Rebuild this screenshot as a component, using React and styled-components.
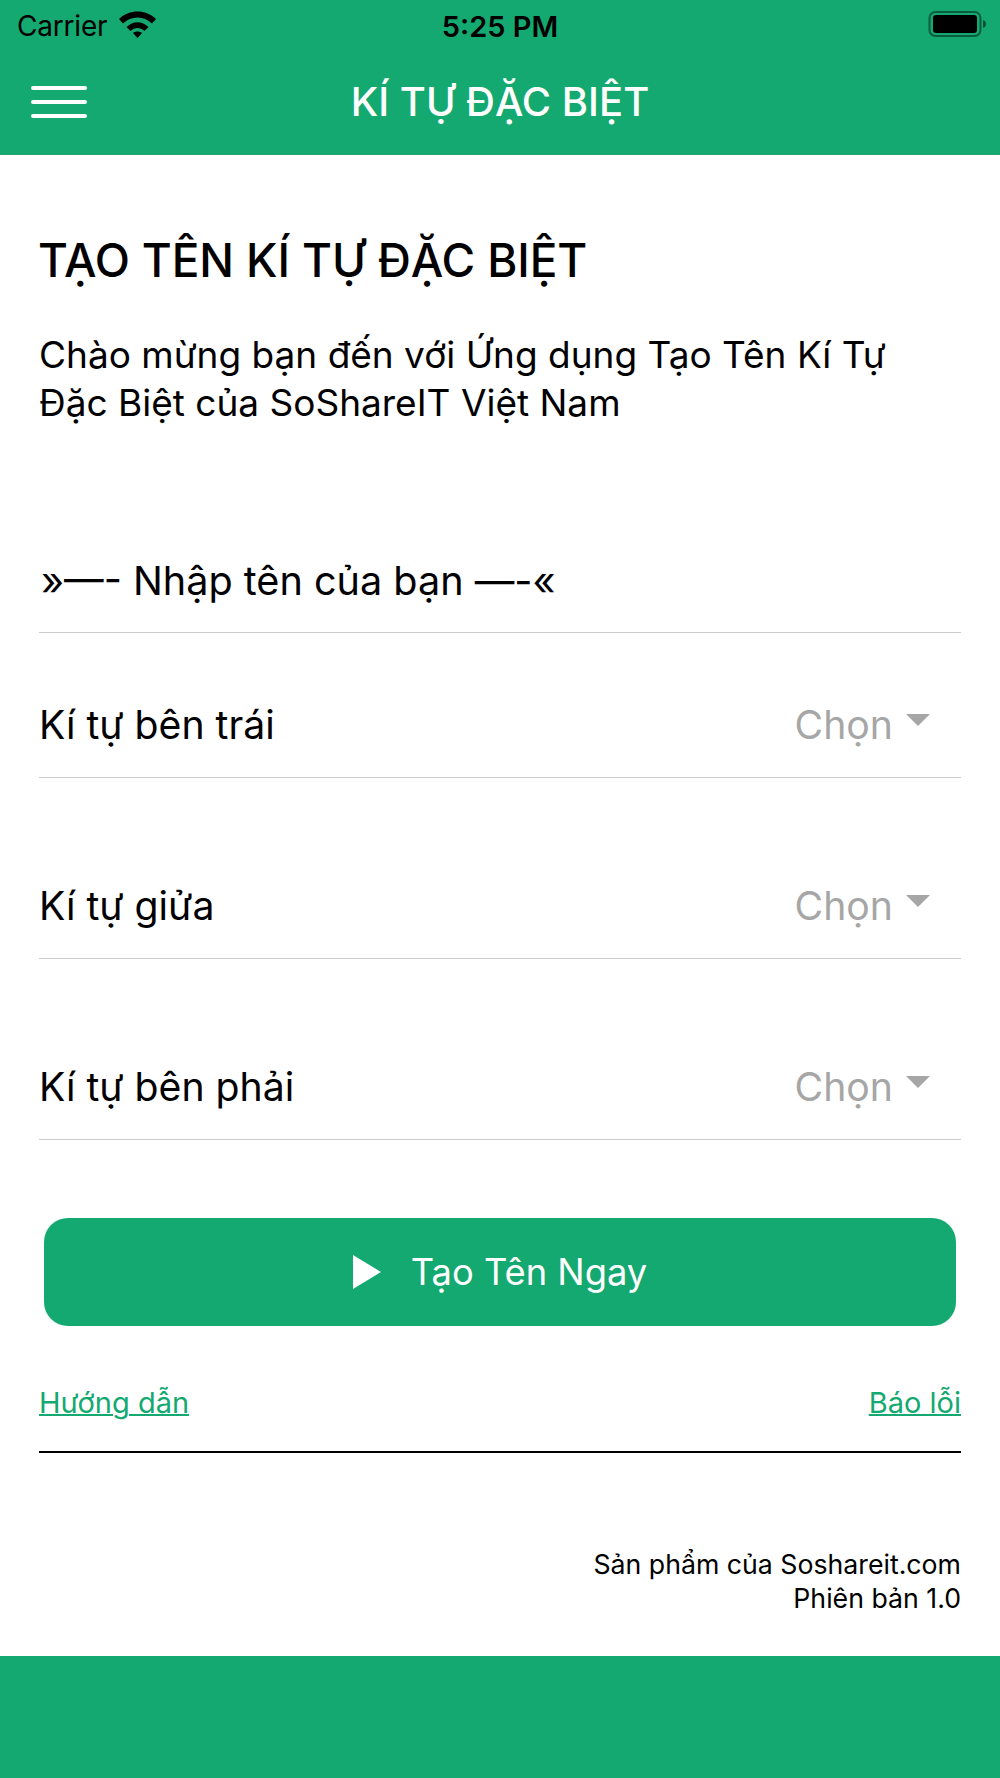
import styled, { createGlobalStyle } from "styled-components";

const GREEN = "#14a970";

const GlobalStyle = createGlobalStyle`
  html, body { margin: 0; padding: 0; background: #fff; }
  body { font-family: Inter, "Noto Sans", sans-serif; color: #000; }
`;

const Page = styled.div`
  width: 1000px;
  height: 1778px;
  display: flex;
  flex-direction: column;
  overflow: hidden;
`;

const Header = styled.header`
  height: 154px;
  background: ${GREEN};
  border-bottom: 1px solid #2e9e72;
  display: flex;
  flex-direction: column;
  flex-shrink: 0;
`;

const StatusBar = styled.div`
  height: 52px;
  padding: 0 10px 0 17px;
  display: grid;
  grid-template-columns: 1fr auto 1fr;
  align-items: center;
`;

const StatusLeft = styled.div`
  display: flex;
  align-items: center;
  gap: 12px;
  font-size: 28px;
  letter-spacing: -0.2px;
  svg {
    margin-bottom: 5px;
  }
`;

const Clock = styled.div`
  font-size: 29px;
  font-weight: 600;
  margin-right: 7px;
`;

const StatusRight = styled.div`
  display: flex;
  justify-content: flex-end;
  padding-bottom: 5px;
`;

const NavBar = styled.div`
  flex: 1;
  display: flex;
  align-items: center;
  justify-content: center;
  position: relative;
  padding-bottom: 4px;
`;

const Menu = styled.div`
  position: absolute;
  left: 31px;
  top: 34px;
  width: 56px;
  display: flex;
  flex-direction: column;
  gap: 10px;
  span {
    height: 4px;
    background: #fff;
    border-radius: 2px;
  }
`;

const NavTitle = styled.h1`
  margin: 0;
  font-size: 40px;
  font-weight: 500;
  color: #fff;
`;

const Content = styled.main`
  flex: 1;
  padding: 0 39px;
  display: flex;
  flex-direction: column;
`;

const Heading = styled.h2`
  margin: 81px 0 0 -1px;
  font-size: 45.9px;
  line-height: 50px;
  font-weight: 500;
  letter-spacing: -0.1px;
`;

const Intro = styled.p`
  margin: 45px 0 0;
  font-size: 37px;
  line-height: 48px;
`;

const NameInput = styled.div`
  margin-top: 125px;
  height: 80px;
  border-bottom: 1px solid #ccc;
  font-size: 39.6px;
  line-height: 58px;
  padding-left: 2px;
`;

const Row = styled.div`
  height: 106px;
  margin-top: ${(p) => p.$top}px;
  border-bottom: 1px solid #ccc;
  display: flex;
  align-items: center;
  justify-content: space-between;
  font-size: 39.2px;
  padding-right: 31px;
`;

const Picker = styled.div`
  display: flex;
  align-items: center;
  gap: 13px;
  color: #a6a6a6;
`;

const Caret = styled.span`
  width: 0;
  height: 0;
  margin-top: -9px;
  border-left: 12px solid transparent;
  border-right: 12px solid transparent;
  border-top: 12px solid #a6a6a6;
`;

const Button = styled.button`
  margin: 78px 5px 0;
  height: 108px;
  border: 0;
  border-radius: 24px;
  background: ${GREEN};
  color: #fff;
  font-family: inherit;
  font-size: 36.3px;
  display: flex;
  align-items: center;
  justify-content: center;
  gap: 30px;
`;

const Links = styled.div`
  margin-top: 60px;
  height: 65px;
  border-bottom: 2px solid #000;
  display: flex;
  justify-content: space-between;
  font-size: 29px;
  line-height: 34px;
`;

const TextLink = styled.a`
  color: ${GREEN};
  text-decoration: underline;
  text-decoration-thickness: 2px;
`;

const Footer = styled.div`
  margin-top: 94px;
  text-align: right;
  font-size: 26.7px;
  line-height: 34px;
`;

const Band = styled.div`
  height: 122px;
  background: ${GREEN};
  flex-shrink: 0;
`;

const rows = [
  { label: "Kí tự bên trái", top: 38 },
  { label: "Kí tự giửa", top: 74 },
  { label: "Kí tự bên phải", top: 74 },
];

export default function App() {
  return (
    <Page>
      <GlobalStyle />
      <Header>
        <StatusBar>
          <StatusLeft>
            Carrier
            <svg width="37" height="28" viewBox="0 0 37 28">
              <path d="M0 9C10 -1 27 -1 37 9L33 13.500C25 5.500 12 5.500 4 13.500Z" fill="#000" />
              <path d="M7.500 17C14 10.500 23 10.500 29.500 17L25.500 21C21 17 16 17 11.500 21Z" fill="#000" />
              <path d="M14 23C16.500 21 20.500 21 23 23L18.500 28Z" fill="#000" />
            </svg>
          </StatusLeft>
          <Clock>5:25 PM</Clock>
          <StatusRight>
            <svg width="62" height="28" viewBox="0 0 62 28">
              <rect x="1.500" y="2" width="51" height="24" rx="6" fill="none" stroke="#000" strokeOpacity="0.45" strokeWidth="2" />
              <rect x="5" y="5" width="44" height="18" rx="3" fill="#000" />
              <path d="M55 10C57 10.500 58 12 58 14C58 16 57 17.500 55 18Z" fill="#000" fillOpacity="0.5" />
            </svg>
          </StatusRight>
        </StatusBar>
        <NavBar>
          <Menu>
            <span />
            <span />
            <span />
          </Menu>
          <NavTitle>KÍ TỰ ĐẶC BIỆT</NavTitle>
        </NavBar>
      </Header>
      <Content>
        <Heading>TẠO TÊN KÍ TỰ ĐẶC BIỆT</Heading>
        <Intro>
          Chào mừng bạn đến với Ứng dụng Tạo Tên Kí Tự
          <br />
          Đặc Biệt của SoShareIT Việt Nam
        </Intro>
        <NameInput>»—- Nhập tên của bạn —-«</NameInput>
        {rows.map((r) => (
          <Row key={r.label} $top={r.top}>
            {r.label}
            <Picker>
              Chọn
              <Caret />
            </Picker>
          </Row>
        ))}
        <Button>
          <svg width="28" height="34" viewBox="0 0 28 34">
            <path d="M0 0L28 17L0 34Z" fill="#fff" />
          </svg>
          Tạo Tên Ngay
        </Button>
        <Links>
          <TextLink>Hướng dẫn</TextLink>
          <TextLink>Báo lỗi</TextLink>
        </Links>
        <Footer>
          Sản phẩm của Soshareit.com
          <br />
          Phiên bản 1.0
        </Footer>
      </Content>
      <Band />
    </Page>
  );
}
